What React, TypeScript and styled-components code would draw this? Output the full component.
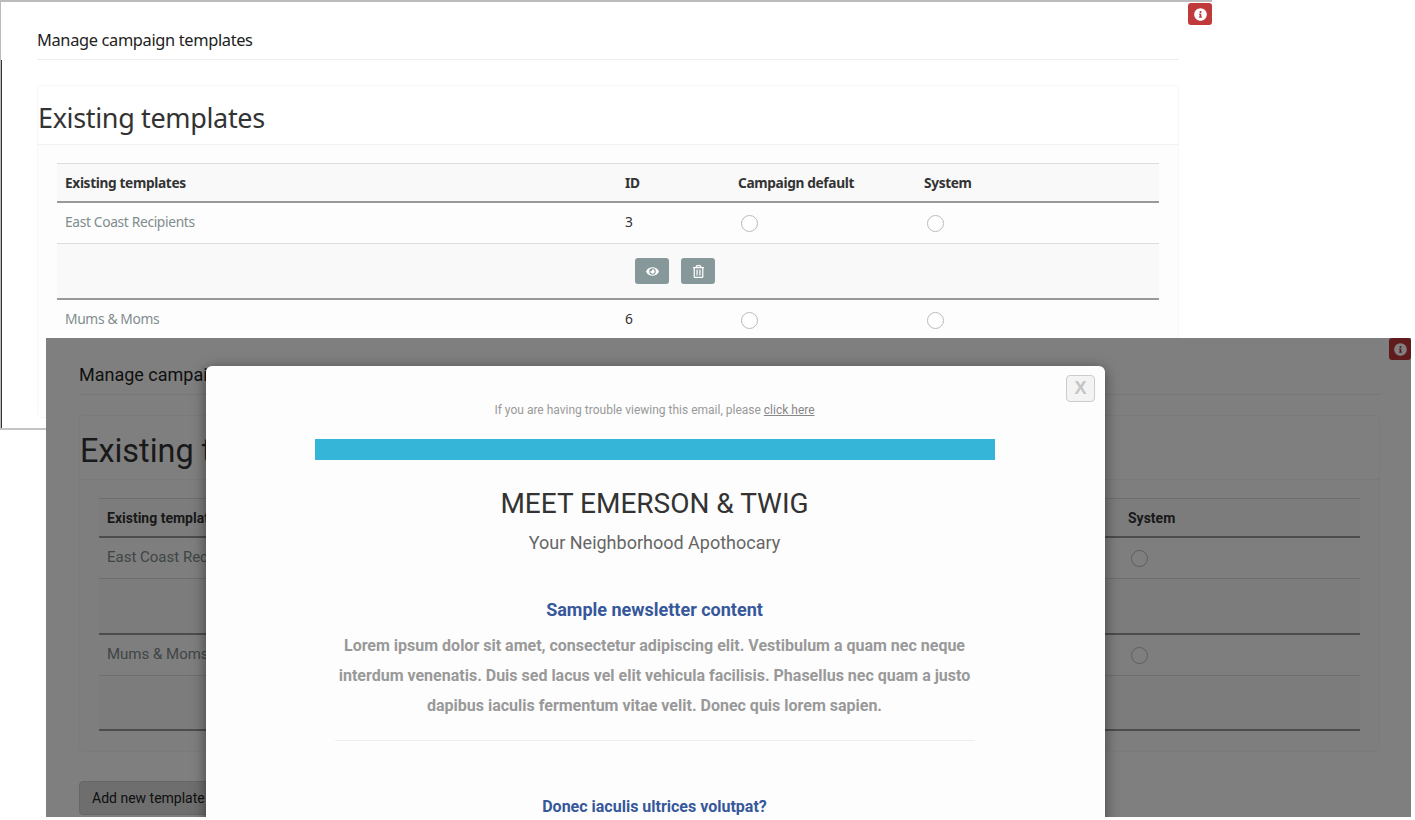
import React from 'react';
import styled, { createGlobalStyle, ThemeProvider } from 'styled-components';
import { FaEye, FaInfoCircle, FaRegTrashAlt } from 'react-icons/fa';

const backTheme = {
  font: '"Noto Sans", "Open Sans", sans-serif',
  spacing: '-0.35px',
  titleSize: '16.4px',
  headingSize: '27px',
  headSize: '13.7px',
  cellSize: '13.8px',
  cellPad: '4px',
  padLeft: '36px',
  padRight: '33px',
  titleTop: '26px',
  panelGap: '25px',
  headingHeight: '59px',
  headingPad: '4px',
  cols: '560px 113px 186px 1fr',
  actionsLeft: '578px',
  actionHeight: '56px',
};

const frontTheme = {
  font: 'Roboto, sans-serif',
  spacing: '0',
  titleSize: '18px',
  headingSize: '32.4px',
  headSize: '14px',
  cellSize: '15px',
  cellPad: '2px',
  padLeft: '33px',
  padRight: '31px',
  titleTop: '25px',
  panelGap: '20px',
  headingHeight: '64px',
  headingPad: '6px',
  cols: '660px 150px 211px 1fr',
  actionsLeft: '660px',
  actionHeight: '55.5px',
};

const GlobalStyle = createGlobalStyle`
  html, body {
    margin: 0;
    padding: 0;
    background: #fff;
  }
  * {
    box-sizing: border-box;
  }
`;

const Desktop = styled.div`
  position: relative;
  width: 1415px;
  height: 820px;
  overflow: hidden;
  background: #fff;
`;

const BackWindow = styled.section`
  position: absolute;
  left: 0;
  top: 0;
  width: 1212px;
  height: 430px;
  overflow: hidden;
  background: #fff;
  border-top: 2px solid #bbb;
  border-bottom: 2px solid #c4c4c4;
  border-left: 1px solid #bbb;

  &::before {
    content: '';
    position: absolute;
    left: 0;
    top: 58px;
    bottom: 0;
    width: 1px;
    background: #333;
  }
`;

const FrontWindow = styled.section`
  position: absolute;
  left: 46px;
  top: 338px;
  width: 1365px;
  height: 479px;
  overflow: hidden;
  background: #fff;
`;

const Page = styled.div`
  padding: ${(p) => p.theme.titleTop} ${(p) => p.theme.padRight} 0 ${(p) => p.theme.padLeft};
  font-family: ${(p) => p.theme.font};
  letter-spacing: ${(p) => p.theme.spacing};
  color: #222;
`;

const PageTitle = styled.h1`
  margin: 0;
  padding-bottom: 7px;
  font-size: ${(p) => p.theme.titleSize};
  line-height: 24px;
  font-weight: 400;
  border-bottom: 1px solid #eee;
`;

const Panel = styled.div`
  margin-top: ${(p) => p.theme.panelGap};
  border: 1px solid #f7f7f7;
  border-radius: 4px;
`;

const PanelHeading = styled.h2`
  display: flex;
  align-items: center;
  height: ${(p) => p.theme.headingHeight};
  margin: 0;
  padding-top: ${(p) => p.theme.headingPad};
  font-size: ${(p) => p.theme.headingSize};
  font-weight: 400;
  color: #333;
  border-bottom: 1px solid #f2f2f2;
`;

const Well = styled.div`
  padding: 18px 19px 20px;
  background: #fdfdfd;
`;

const HeadRow = styled.div`
  display: grid;
  grid-template-columns: ${(p) => p.theme.cols};
  align-items: center;
  height: 40px;
  background: #f9f9f9;
  border-top: 1px solid #ddd;
  border-bottom: 2px solid #999;
  font-size: ${(p) => p.theme.headSize};
  font-weight: 700;
  color: #333;
`;

const Row = styled.div`
  display: grid;
  grid-template-columns: ${(p) => p.theme.cols};
  align-items: center;
  height: 41px;
  border-bottom: 1px solid #ddd;
  font-size: ${(p) => p.theme.cellSize};
  color: #333;
`;

const Cell = styled.div`
  padding: 0 8px ${(p) => p.theme.cellPad};
  white-space: nowrap;
`;

const NameCell = styled(Cell)`
  color: #7f8c8d;
`;

const HeadCell = styled.div`
  padding: 0 8px;
  white-space: nowrap;
`;

const Radio = styled.span`
  display: block;
  width: 17px;
  height: 17px;
  margin: 1px 0 0 11px;
  background: #fff;
  border: 1px solid #bbb;
  border-radius: 50%;
`;

const ActionRow = styled.div`
  display: flex;
  align-items: center;
  gap: 12px;
  height: ${(p) => p.theme.actionHeight};
  padding-left: ${(p) => p.theme.actionsLeft};
  background: #f9f9f9;
  border-bottom: 2px solid #999;
`;

const ActionButton = styled.button`
  display: flex;
  align-items: center;
  justify-content: center;
  width: 34px;
  height: 26px;
  padding: 0;
  border: 0;
  border-radius: 3px;
  background: #87989a;
  color: #fff;
  font-size: 13px;
`;

const AddButton = styled.button`
  display: block;
  width: 160px;
  height: 34px;
  margin-top: 29px;
  padding: 0 12px;
  text-align: left;
  background: #ddd;
  border: 1px solid #ccc;
  border-radius: 4px;
  font-family: ${(p) => p.theme.font};
  font-size: 14px;
  color: #222;
`;

const InfoBadge = styled.div<{ $top: number; $width: number }>`
  position: absolute;
  top: ${(p) => p.$top}px;
  right: 0;
  display: flex;
  align-items: center;
  justify-content: center;
  width: ${(p) => p.$width}px;
  height: 22px;
  background: #c0393b;
  border-radius: 3px;
  color: #fff;
  font-size: 13px;
`;

const Overlay = styled.div`
  position: absolute;
  inset: 0;
  background: rgba(0, 0, 0, 0.5);
`;

const Modal = styled.div`
  position: absolute;
  left: 160px;
  top: 28px;
  width: 899px;
  height: 520px;
  padding: 36px 2px 0 0;
  display: flex;
  flex-direction: column;
  align-items: center;
  text-align: center;
  background: #fdfdfd;
  border-radius: 6px;
  box-shadow: 0 3px 14px rgba(0, 0, 0, 0.5);
  font-family: Roboto, sans-serif;
`;

const CloseButton = styled.button`
  position: absolute;
  top: 9px;
  right: 10px;
  width: 29px;
  height: 27px;
  padding: 0;
  background: #f3f3f3;
  border: 1px solid #ccc;
  border-radius: 4px;
  font-family: "Liberation Sans", sans-serif;
  font-size: 18px;
  font-weight: 700;
  color: #c4c4c4;
`;

const Trouble = styled.p`
  margin: 0;
  font-size: 12px;
  line-height: 16px;
  color: #999;

  a {
    color: #888;
    text-decoration: underline;
  }
`;

const Banner = styled.div`
  width: 680px;
  height: 21px;
  margin-top: 21px;
  background: #35b5d7;
`;

const BrandTitle = styled.h2`
  margin: 27px 0 0;
  font-size: 28px;
  line-height: 34px;
  font-weight: 400;
  color: #333;
`;

const BrandSub = styled.h3`
  margin: 10px 0 0;
  font-size: 18px;
  line-height: 24px;
  font-weight: 400;
  color: #666;
`;

const SectionTitle = styled.h4<{ $gap: number; $size: number }>`
  margin: ${(p) => p.$gap}px 0 0;
  font-size: ${(p) => p.$size}px;
  line-height: 24px;
  font-weight: 700;
  color: #36589b;
`;

const Body = styled.p`
  width: 680px;
  margin: 9px 0 0;
  font-size: 16px;
  line-height: 30px;
  font-weight: 700;
  color: #999;
`;

const Rule = styled.hr`
  width: 640px;
  margin: 19px 0 0;
  border: 0;
  border-top: 1px solid #eee;
`;

const templates = [
  { name: 'East Coast Recipients', id: 3 },
  { name: 'Mums & Moms', id: 6 },
];

const TemplatesPage = ({ withActions }: { withActions: boolean }) => (
  <Page>
    <PageTitle>Manage campaign templates</PageTitle>
    <Panel>
      <PanelHeading>Existing templates</PanelHeading>
      <Well>
        <HeadRow>
          <HeadCell>Existing templates</HeadCell>
          <HeadCell>ID</HeadCell>
          <HeadCell>Campaign default</HeadCell>
          <HeadCell>System</HeadCell>
        </HeadRow>
        {templates.map((t) => (
          <React.Fragment key={t.id}>
            <Row>
              <NameCell>{t.name}</NameCell>
              <Cell>{t.id}</Cell>
              <Radio />
              <Radio />
            </Row>
            <ActionRow>
              {withActions && (
                <>
                  <ActionButton aria-label="View">
                    <FaEye />
                  </ActionButton>
                  <ActionButton aria-label="Delete">
                    <FaRegTrashAlt />
                  </ActionButton>
                </>
              )}
            </ActionRow>
          </React.Fragment>
        ))}
      </Well>
    </Panel>
    <AddButton>Add new template</AddButton>
  </Page>
);

const App = () => (
  <>
    <GlobalStyle />
    <Desktop>
      <BackWindow>
        <ThemeProvider theme={backTheme}>
          <TemplatesPage withActions />
        </ThemeProvider>
        <InfoBadge $top={1} $width={24}>
          <FaInfoCircle />
        </InfoBadge>
      </BackWindow>
      <FrontWindow>
        <ThemeProvider theme={frontTheme}>
          <TemplatesPage withActions={false} />
        </ThemeProvider>
        <InfoBadge $top={0} $width={22}>
          <FaInfoCircle />
        </InfoBadge>
        <Overlay />
        <Modal>
          <CloseButton>X</CloseButton>
          <Trouble>
            If you are having trouble viewing this email, please <a href="#">click here</a>
          </Trouble>
          <Banner />
          <BrandTitle>MEET EMERSON &amp; TWIG</BrandTitle>
          <BrandSub>Your Neighborhood Apothocary</BrandSub>
          <SectionTitle $gap={43} $size={18}>Sample newsletter content</SectionTitle>
          <Body>
            Lorem ipsum dolor sit amet, consectetur adipiscing elit. Vestibulum a quam nec neque
            interdum venenatis. Duis sed lacus vel elit vehicula facilisis. Phasellus nec quam a
            justo dapibus iaculis fermentum vitae velit. Donec quis lorem sapien.
          </Body>
          <Rule />
          <SectionTitle $gap={54} $size={16}>Donec iaculis ultrices volutpat?</SectionTitle>
        </Modal>
      </FrontWindow>
    </Desktop>
  </>
);

export default App;
